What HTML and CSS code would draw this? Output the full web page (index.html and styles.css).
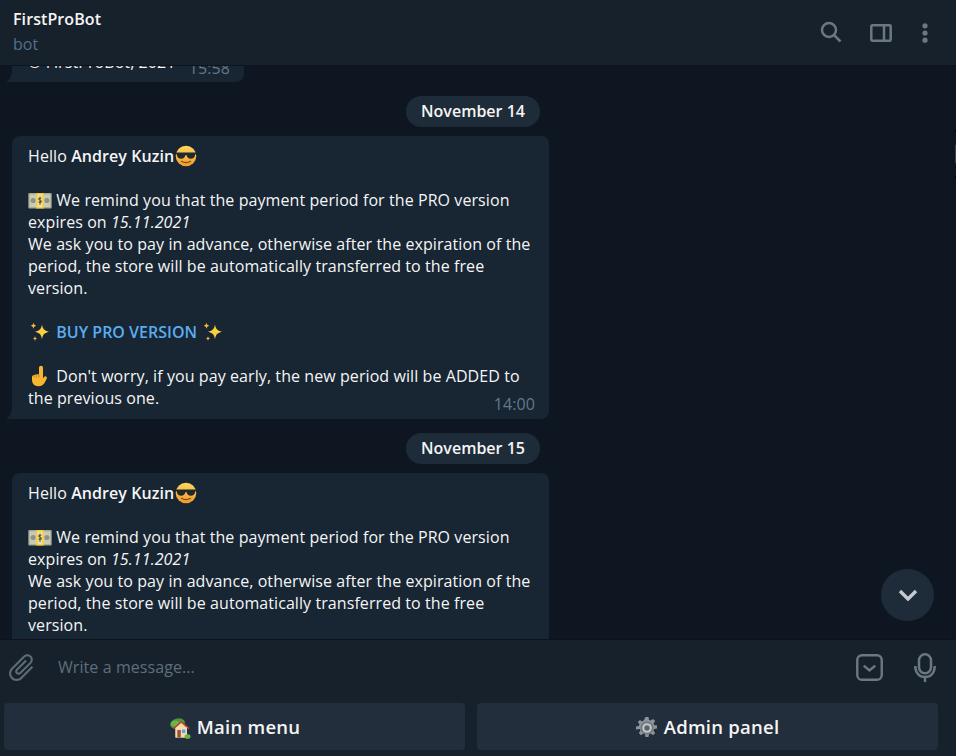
FILE: index.html
```html
<!DOCTYPE html>
<html lang="en">
<head>
<meta charset="utf-8">
<title>FirstProBot</title>
<link rel="stylesheet" href="styles.css">
</head>
<body>
<svg class="defs" width="0" height="0" aria-hidden="true">
  <defs>
    <linearGradient id="faceG" x1="0" y1="0" x2="0" y2="1"><stop offset="0" stop-color="#ffd75e"/><stop offset="1" stop-color="#f09a2a"/></linearGradient>
    <symbol id="e-cool" viewBox="0 0 22 22">
      <circle cx="11" cy="11" r="10.300" fill="url(#faceG)"/>
      <path d="M1 7.500h20v1.600l-.8.400c-.3 3-2.100 4.200-4.400 4.200-2.400 0-3.700-1.500-4.100-3.500h-1.400c-.4 2-1.700 3.500-4.100 3.500-2.300 0-4.100-1.200-4.400-4.200l-.8-.4z" fill="#23282d"/>
      <path d="M6.500 16.300c2.800 1.600 6.200 1.600 9 0" fill="none" stroke="#7a4a16" stroke-width="1.200" stroke-linecap="round"/>
    </symbol>
    <symbol id="e-money" viewBox="0 0 22 16">
      <rect x="0" y="1" width="22" height="14.500" rx="1" fill="#a5a893"/>
      <rect x="1.200" y="2.200" width="19.600" height="12" fill="#c9cbb6"/>
      <circle cx="4.500" cy="8" r="2.400" fill="#8f9383"/>
      <circle cx="17.500" cy="8" r="2.400" fill="#8f9383"/>
      <rect x="7.500" y="1" width="7" height="14.500" fill="#f8d23c"/>
      <rect x="9" y="2.500" width="4" height="11.500" fill="#e9e4c0"/>
      <path d="M12.200 6.200c-.3-.8-2.400-1-2.400.3 0 1.500 2.500.8 2.500 2.500 0 1.300-2.300 1.100-2.700.2M11 4.300v8" fill="none" stroke="#6b5518" stroke-width="1"/>
    </symbol>
    <symbol id="e-sparkles" viewBox="0 0 22 22">
      <path d="M13 3.500c.7 4.300 2 5.900 7 7.300-5 1.400-6.300 3-7 7.500-.7-4.500-2-6.100-7-7.500 5-1.400 6.300-3 7-7.300z" fill="#fbd03e"/>
      <path d="M4.500 1.500c.3 2.100.9 2.800 2.800 3.300-1.900.5-2.500 1.200-2.800 3.300-.3-2.100-.9-2.800-2.800-3.300 1.900-.5 2.500-1.200 2.800-3.300z" fill="#f8c338"/>
      <path d="M6 15c.2 1.600.7 2.200 2.300 2.600-1.600.4-2.100 1-2.300 2.600-.2-1.600-.7-2.200-2.300-2.600 1.600-.4 2.100-1 2.300-2.600z" fill="#f8c338"/>
    </symbol>
    <symbol id="e-point" viewBox="0 0 22 22">
      <g transform="translate(22 0) scale(-1 1)">
        <path d="M10 .8c1.200 0 2 .8 2 2v6.700c1-.5 2-.5 2.500.1 1-.4 2-.2 2.500.6 1.200-.2 2 .6 2 1.800v2.800c0 4-2.600 6.400-6.300 6.400-3.300 0-5.200-1.500-6.500-3.800L4.300 13.700c-.6-1.100 0-2 .9-2.300.8-.2 1.500.1 2 .8l.8 1.100V2.800c0-1.200.8-2 2-2z" fill="#f6b62e"/>
        <path d="M12 10v2.500M14.500 10v2.500M17 10.500v2" stroke="#c9811a" stroke-width=".9" fill="none"/>
      </g>
    </symbol>
    <symbol id="e-house" viewBox="0 0 22 22">
      <ellipse cx="8.500" cy="6.500" rx="7.500" ry="5" fill="#4f9a38" transform="rotate(-15 8.500 6.500)"/>
      <ellipse cx="6" cy="6.500" rx="4" ry="3" fill="#6cb548"/>
      <rect x="6.500" y="10" width="11.500" height="10.500" fill="#f3dcb0"/>
      <path d="M12.300 3.800 20.500 11l-1 1.200-7.200-6.200-7.200 6.200-1-1.200z" fill="#c8412f"/>
      <path d="M12.300 6 18 11v9.500H6.500V11z" fill="#f3dcb0"/>
      <rect x="8.300" y="13" width="3.500" height="7.500" fill="#97523a"/>
      <rect x="13" y="12.500" width="3.400" height="3.500" fill="#5aa5df"/>
      <ellipse cx="18.500" cy="19.500" rx="3" ry="2.300" fill="#6cb548"/>
    </symbol>
    <symbol id="e-gear" viewBox="0 0 22 22">
      <path d="M9.500 0h3l.5 2.900 1.700.7 2.400-1.700 2.100 2.100-1.700 2.400.7 1.700 2.800.4v3l-2.800.5-.7 1.700 1.700 2.400-2.100 2.100-2.400-1.700-1.700.7-.5 2.800h-3l-.5-2.800-1.700-.7-2.400 1.700-2.100-2.100 1.700-2.400-.7-1.700L0 12.500v-3l2.800-.4.7-1.700-1.700-2.400 2.100-2.100 2.400 1.700L8 3.100z" fill="#8d9499"/>
      <circle cx="11" cy="11" r="6.500" fill="#6f767c"/>
      <circle cx="11" cy="11" r="4.800" fill="#c3c8cb"/>
      <circle cx="11" cy="11" r="2.700" fill="#5c6369"/>
    </symbol>
  </defs>
</svg>
<div class="app">
  <header class="topbar">
    <div class="peer">
      <div class="peer-name">FirstProBot</div>
      <div class="peer-status">bot</div>
    </div>
    <div class="top-actions">
      <svg class="ic ic-search" viewBox="0 0 22 22"><circle cx="9" cy="9" r="7"/><path d="M14.100 14.100 20.500 20.500"/></svg>
      <svg class="ic ic-panel" viewBox="0 0 22 18"><rect x="1.300" y="1.300" width="19.400" height="15.400" rx="1"/><path d="M14 1.300v15.400"/></svg>
      <svg class="ic-dots" viewBox="0 0 6 20"><circle cx="3" cy="2.800" r="2.600"/><circle cx="3" cy="10" r="2.600"/><circle cx="3" cy="17.200" r="2.600"/></svg>
    </div>
  </header>

  <main class="chat">
    <article class="bubble bubble-first">
      <p class="msg">© FirstProBot, 2021</p>
      <time class="stamp stamp-first">15:58</time>
    </article>

    <div class="date">November 14</div>
    <article class="bubble">
      <p class="msg">Hello <b>Andrey Kuzin</b><svg class="emoji"><use href="#e-cool"/></svg></p>
      <p class="msg blank">&nbsp;</p>
      <p class="msg"><svg class="emoji emoji-money"><use href="#e-money"/></svg> We remind you that the payment period for the PRO version expires on <i>15.11.2021</i></p>
      <p class="msg">We ask you to pay in advance, otherwise after the expiration of the period, the store will be automatically transferred to the free version.</p>
      <p class="msg blank">&nbsp;</p>
      <p class="msg"><svg class="emoji"><use href="#e-sparkles"/></svg> <a class="link">BUY PRO VERSION</a> <svg class="emoji"><use href="#e-sparkles"/></svg></p>
      <p class="msg blank">&nbsp;</p>
      <p class="msg"><svg class="emoji"><use href="#e-point"/></svg> Don't worry, if you pay early, the new period will be ADDED to the previous one.</p>
      <time class="stamp">14:00</time>
    </article>

    <div class="date">November 15</div>
    <article class="bubble">
      <p class="msg">Hello <b>Andrey Kuzin</b><svg class="emoji"><use href="#e-cool"/></svg></p>
      <p class="msg blank">&nbsp;</p>
      <p class="msg"><svg class="emoji emoji-money"><use href="#e-money"/></svg> We remind you that the payment period for the PRO version expires on <i>15.11.2021</i></p>
      <p class="msg">We ask you to pay in advance, otherwise after the expiration of the period, the store will be automatically transferred to the free version.</p>
      <p class="msg blank">&nbsp;</p>
      <p class="msg"><svg class="emoji"><use href="#e-sparkles"/></svg> <a class="link">BUY PRO VERSION</a> <svg class="emoji"><use href="#e-sparkles"/></svg></p>
    </article>

    <button class="to-bottom" type="button" aria-label="Scroll to bottom">
      <svg viewBox="0 0 20 12"><path d="M2 2 10 10 18 2"/></svg>
    </button>
    <span class="edge-mark"></span>
  </main>

  <footer class="composer">
    <div class="input-row">
      <svg class="clip" viewBox="0 0 24 24"><path transform="rotate(45 12 12)" d="M16.500 6v11.500c0 2.210-1.790 4-4 4s-4-1.790-4-4V5c0-1.380 1.120-2.500 2.500-2.500s2.500 1.120 2.500 2.500v10.500c0 .55-.45 1-1 1s-1-.45-1-1V6H10v9.500c0 1.380 1.120 2.500 2.500 2.500s2.500-1.120 2.500-2.500V5c0-2.210-1.790-4-4-4S7 2.790 7 5v12.500c0 3.040 2.460 5.500 5.500 5.500s5.500-2.460 5.500-5.500V6h-1.500z"/></svg>
      <div class="placeholder">Write a message...</div>
      <svg class="ic ic-kb" viewBox="0 0 28 28"><rect x="1.300" y="1.300" width="25.400" height="25.400" rx="5"/><path d="M8 12 14 17 20 12"/></svg>
      <svg class="ic ic-mic" viewBox="0 0 22 29"><rect x="5" y="1.300" width="12" height="19" rx="6"/><path d="M1.300 13c0 7 4 11 9.700 11s9.700-4 9.700-11M11 24v5"/></svg>
    </div>
    <div class="kb-buttons">
      <button class="kb-btn" type="button"><svg class="btn-emoji"><use href="#e-house"/></svg> Main menu</button>
      <button class="kb-btn" type="button"><svg class="btn-emoji"><use href="#e-gear"/></svg> Admin panel</button>
    </div>
  </footer>
</div>
</body>
</html>
```
FILE: styles.css
```css
* { box-sizing: border-box; }
html, body { margin: 0; height: 100%; }
body {
  font-family: "Open Sans", "Noto Sans", sans-serif;
  font-size: 16px;
  line-height: 22px;
  letter-spacing: 0.08px;
  color: #f5f5f5;
  background: #0e1621;
  overflow: hidden;
}
.defs { position: absolute; }
.app { width: 956px; height: 756px; display: flex; flex-direction: column; }

.topbar {
  height: 66px;
  flex: none;
  display: flex;
  justify-content: space-between;
  align-items: center;
  padding: 0 28px 0 13px;
  background: #17212b;
  border-bottom: 1px solid #0c131c;
  position: relative;
  z-index: 1;
}
.peer-name { font-weight: 600; color: #f5f5f5; margin-top: -3px; margin-bottom: 3px; }
.peer-status { color: #52708c; }
.top-actions { display: flex; align-items: center; }
.ic { fill: none; stroke: #6b7782; stroke-width: 2.5; }
.ic-search { width: 22px; height: 22px; margin-right: 28px; margin-bottom: 1px; }
.ic-panel { width: 22px; height: 18px; margin-right: 30px; }
.ic-dots { width: 6px; height: 20px; fill: #6b7782; }

.chat {
  flex: 1;
  min-height: 0;
  position: relative;
  overflow: hidden;
  display: flex;
  flex-direction: column;
  align-items: flex-start;
  padding: 0 0 0 12px;
  background: #0e1621;
}
.bubble {
  position: relative;
  width: 537px;
  flex: none;
  padding: 9px 16px 10px;
  background: #182533;
  border-radius: 8px 8px 8px 0;
}
.bubble::before {
  content: "";
  position: absolute;
  left: -7px;
  bottom: 0;
  width: 7px;
  height: 12px;
  background: radial-gradient(ellipse 7px 12px at 0 0, transparent 97%, #182533 100%);
}
.bubble-first { width: 232px; margin-top: -24px; padding-bottom: 9px; }
.msg { margin: 0; }
b { font-weight: 600; }
.link { color: #5aadf0; font-weight: 600; letter-spacing: 0; }
.stamp {
  position: absolute;
  right: 14px;
  bottom: 4px;
  color: #64788a;
}
.stamp-first { bottom: 3px; }
.emoji { width: 24px; height: 22px; vertical-align: -5px; }
.emoji-money { height: 17px; vertical-align: -3px; }

.date {
  flex: none;
  align-self: center;
  margin: 14px 22px 9px 0;
  width: 134px;
  height: 31px;
  line-height: 31px;
  text-align: center;
  font-weight: 600;
  letter-spacing: 0;
  color: #f5f5f5;
  background: #1e2c3a;
  border-radius: 16px;
}
.to-bottom {
  position: absolute;
  left: 881px;
  top: 503px;
  width: 53px;
  height: 52px;
  padding: 0;
  border: 0;
  border-radius: 50%;
  background: #1e2c3a;
  display: flex;
  align-items: center;
  justify-content: center;
}
.to-bottom svg { width: 20px; height: 12px; fill: none; stroke: #c3c9ce; stroke-width: 3.4; }
.edge-mark {
  position: absolute;
  right: 0;
  top: 64px;
  width: 1px;
  height: 48px;
  background: linear-gradient(#000 0 2px, transparent 2px 15px, #3d444b 15px 33px, transparent 33px 46px, #000 46px);
}

.composer {
  flex: none;
  height: 117px;
  background: #17212b;
  border-top: 1px solid #0c131c;
}
.input-row {
  height: 63px;
  display: flex;
  align-items: center;
  padding: 0 20px 8px 5px;
}
.clip { width: 33px; height: 33px; fill: #5f6b76; flex: none; }
.placeholder { flex: 1; margin-left: 20px; color: #5f6e7c; position: relative; top: -1px; }
.ic-kb { width: 27px; height: 27px; margin-right: 31px; flex: none; }
.ic-mic { width: 22px; height: 29px; flex: none; }
.kb-buttons {
  display: grid;
  grid-template-columns: 461px 461px;
  gap: 12px;
  padding-left: 4px;
}
.kb-btn {
  height: 47px;
  padding: 1px 0 0;
  border: 0;
  border-radius: 4px;
  background: #232e3c;
  color: #f5f5f5;
  font: 600 18.5px/46px "Open Sans", "Noto Sans", sans-serif;
  letter-spacing: 0.25px;
  text-align: center;
}
.btn-emoji { width: 22px; height: 22px; vertical-align: -5px; margin-right: 1px; }
```
